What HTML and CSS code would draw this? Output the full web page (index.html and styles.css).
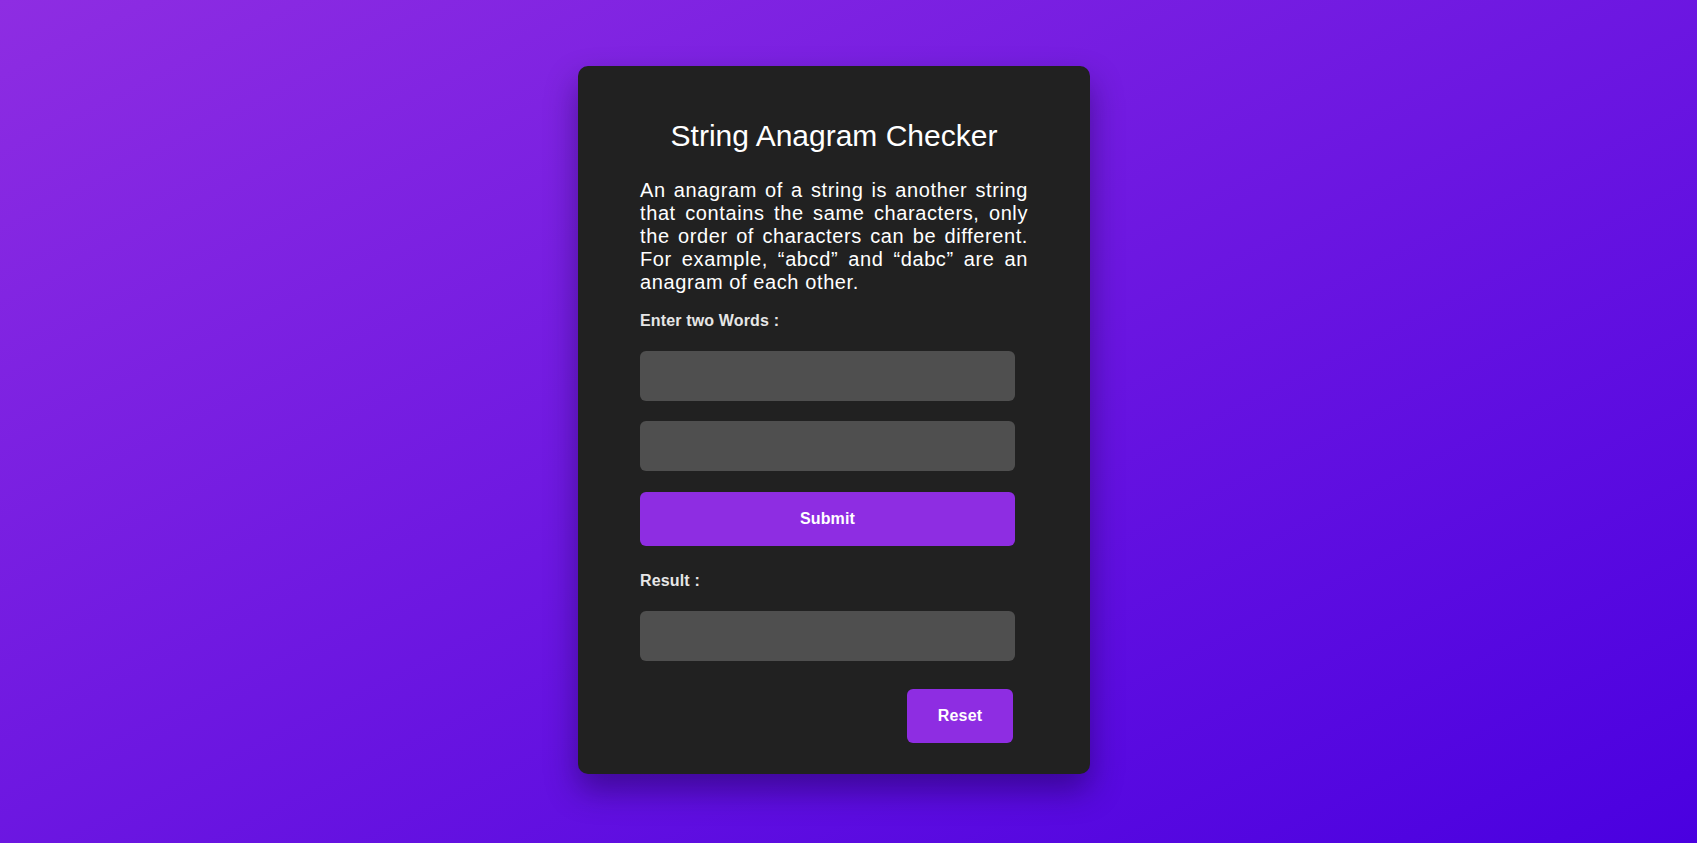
FILE: index.html
```html
<!DOCTYPE html>
<html lang="en">
<head>
<meta charset="utf-8">
<title>String Anagram Checker</title>
<link rel="stylesheet" href="styles.css">
</head>
<body>
<main class="card">
  <h1 class="title">String Anagram Checker</h1>
  <p class="intro">An anagram of a string is another string that contains the same characters, only the order of characters can be different. For example, “abcd” and “dabc” are an anagram of each other.</p>
  <label class="label label-words" for="w1">Enter two Words :</label>
  <input class="field" id="w1" type="text">
  <input class="field field-second" id="w2" type="text">
  <button class="btn btn-submit" type="button">Submit</button>
  <label class="label label-result">Result :</label>
  <div class="field result"></div>
  <div class="actions">
    <button class="btn btn-reset" type="button">Reset</button>
  </div>
</main>
</body>
</html>
```
FILE: styles.css
```css
html, body {
  margin: 0;
  padding: 0;
}
body {
  height: 100vh;
  display: flex;
  align-items: center;
  justify-content: center;
  background: linear-gradient(to bottom right, #8e2de2, #4a00e0);
  font-family: "Liberation Sans", Arial, sans-serif;
}
.card {
  width: 512px;
  box-sizing: border-box;
  margin: -3px 29px 0 0;
  padding: 53px 62px 31px;
  background: #212121;
  border-radius: 10px;
  box-shadow: 0 16px 32px rgba(20, 0, 60, 0.45);
  display: flex;
  flex-direction: column;
  align-items: flex-start;
}
.title {
  align-self: stretch;
  margin: 0;
  font-size: 30px;
  line-height: 34px;
  font-weight: normal;
  color: #ffffff;
  text-align: center;
}
.intro {
  margin: 26px 0 0;
  font-size: 20px;
  line-height: 23px;
  letter-spacing: 0.6px;
  color: #ffffff;
  text-align: justify;
}
.label {
  display: block;
  font-size: 16px;
  line-height: 18px;
  font-weight: bold;
  letter-spacing: 0.15px;
  color: #e6e6e6;
}
.label-words {
  margin-top: 18px;
}
.label-result {
  margin-top: 26px;
}
.field {
  display: block;
  width: 375px;
  height: 50px;
  box-sizing: border-box;
  margin-top: 21px;
  border: none;
  border-radius: 6px;
  background: #4f4f4f;
  outline: none;
  padding: 0 12px;
  font-family: inherit;
  font-size: 16px;
  color: #fff;
}
.field-second {
  margin-top: 20px;
}
.btn {
  border: none;
  border-radius: 6px;
  background: #8e2de2;
  color: #ffffff;
  font-family: "Liberation Sans", Arial, sans-serif;
  font-size: 16px;
  font-weight: bold;
  letter-spacing: 0.15px;
  cursor: pointer;
}
.btn-submit {
  margin-top: 21px;
  width: 375px;
  height: 54px;
}
.actions {
  align-self: stretch;
  display: flex;
  justify-content: flex-end;
  margin-top: 28px;
  padding-right: 15px;
}
.btn-reset {
  width: 106px;
  height: 54px;
}
```
